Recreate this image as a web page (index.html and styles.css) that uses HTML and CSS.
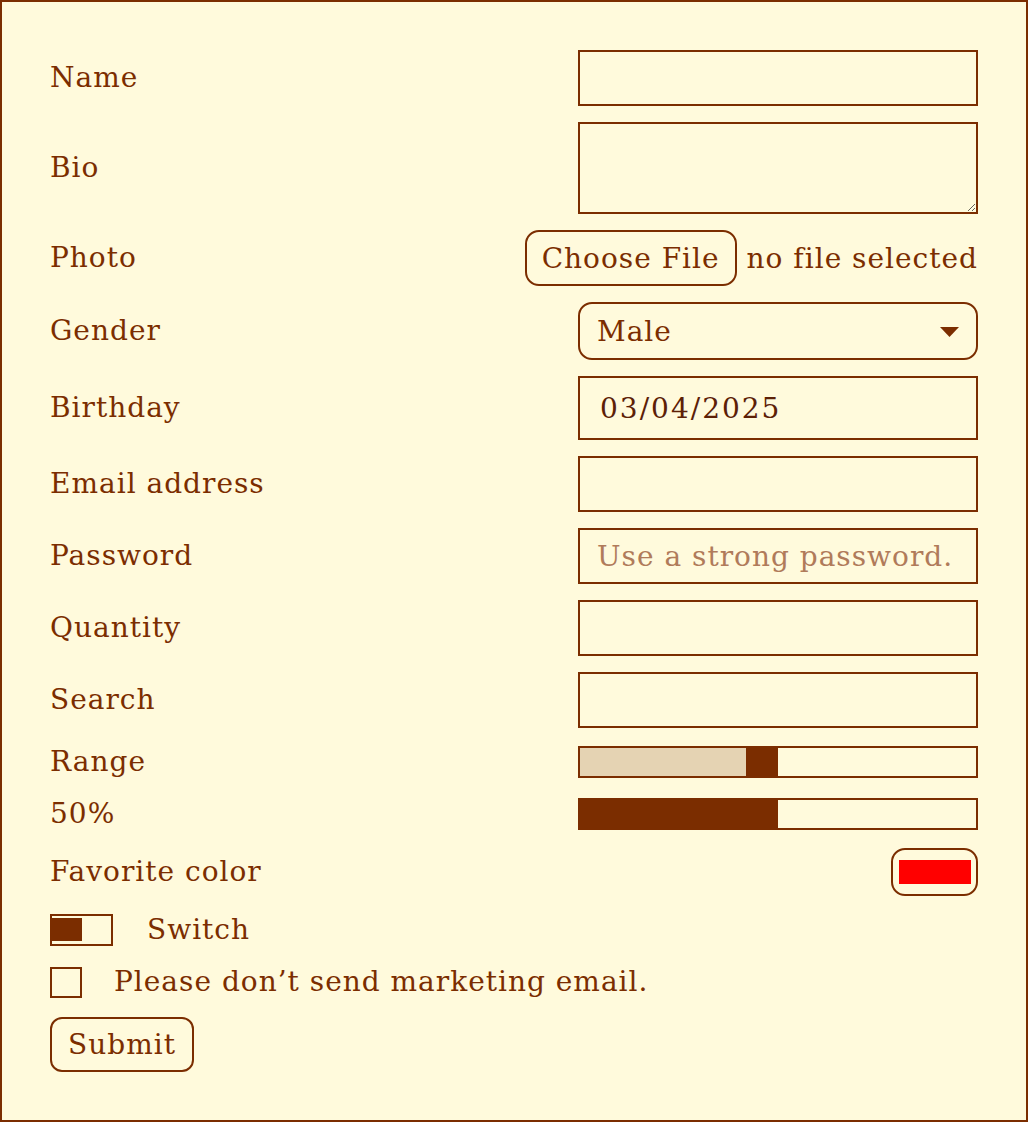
FILE: index.html
```html
<!DOCTYPE html>
<html lang="en">
<head>
<meta charset="utf-8">
<title>Form</title>
<link rel="stylesheet" href="styles.css">
</head>
<body>
<form class="form">
  <div class="row">
    <label class="lbl" for="name">Name</label>
    <input class="field" id="name" type="text">
  </div>
  <div class="row">
    <label class="lbl" for="bio">Bio</label>
    <textarea class="field area" id="bio"></textarea>
  </div>
  <div class="row">
    <span class="lbl">Photo</span>
    <div class="file">
      <label class="btn file-btn" for="photo">Choose File</label>
      <input class="hidden" id="photo" type="file">
      <span class="file-text">no file selected</span>
    </div>
  </div>
  <div class="row">
    <label class="lbl" for="gender">Gender</label>
    <div class="select-wrap">
      <select class="field select" id="gender">
        <option>Male</option>
        <option>Female</option>
        <option>Other</option>
      </select>
      <svg class="caret" width="19" height="10" viewBox="0 0 19 10"><path d="M0 0h19L9.5 10z" fill="#7b2d00"/></svg>
    </div>
  </div>
  <div class="row">
    <label class="lbl" for="bday">Birthday</label>
    <input class="field date" id="bday" type="text" value="03/04/2025">
  </div>
  <div class="row">
    <label class="lbl" for="email">Email address</label>
    <input class="field" id="email" type="email">
  </div>
  <div class="row">
    <label class="lbl" for="pw">Password</label>
    <input class="field" id="pw" type="password" placeholder="Use a strong password.">
  </div>
  <div class="row">
    <label class="lbl" for="qty">Quantity</label>
    <input class="field" id="qty" type="text">
  </div>
  <div class="row">
    <label class="lbl" for="search">Search</label>
    <input class="field" id="search" type="search">
  </div>
  <div class="row">
    <label class="lbl" for="range">Range</label>
    <input class="range" id="range" type="range" min="0" max="1000" value="456">
  </div>
  <div class="row">
    <span class="lbl">50%</span>
    <div class="progress" role="progressbar" aria-valuenow="50" aria-valuemin="0" aria-valuemax="100"></div>
  </div>
  <div class="row">
    <label class="lbl" for="color">Favorite color</label>
    <label class="color" for="color"><span class="swatch"></span></label>
    <input class="hidden" id="color" type="color" value="#ff0000">
  </div>
  <div class="line">
    <span class="switch" role="switch" aria-checked="false"><span class="knob"></span></span>
    <span class="switch-label">Switch</span>
  </div>
  <div class="line">
    <input class="check" id="nomail" type="checkbox">
    <label class="check-label" for="nomail">Please don’t send marketing email.</label>
  </div>
  <div class="line submit-line">
    <button class="btn submit" type="submit">Submit</button>
  </div>
</form>
</body>
</html>
```

FILE: styles.css
```css
* { box-sizing: border-box; }
html, body { margin: 0; }
body {
  width: 1028px;
  height: 1122px;
  background: #fffadc;
  border: 2px solid #7b2d00;
  color: #7b2d00;
  font-family: "DejaVu Serif", "Liberation Serif", serif;
  font-size: 28px;
  letter-spacing: 1px;
  padding: 48px;
}
.form {
  display: flex;
  flex-direction: column;
  gap: 16px;
}
.row {
  display: flex;
  align-items: center;
  justify-content: space-between;
  min-height: 36px;
}
.lbl {
  line-height: 36px;
  white-space: nowrap;
}
.field {
  width: 400px;
  height: 56px;
  border: 2px solid #7b2d00;
  background: #fffadc;
  color: #7b2d00;
  font: inherit;
  letter-spacing: inherit;
  padding: 0 17px;
  border-radius: 0;
  outline: none;
  margin: 0;
}
.field::placeholder { color: #b07b5a; }
.area {
  height: 92px;
  resize: vertical;
  display: block;
}
.hidden { display: none; }
.file {
  display: flex;
  align-items: center;
  gap: 10px;
}
.btn {
  border: 2px solid #7b2d00;
  border-radius: 14px;
  background: #fffadc;
  color: #7b2d00;
  font: inherit;
  letter-spacing: inherit;
  display: inline-flex;
  align-items: center;
  justify-content: center;
  margin: 0;
  cursor: pointer;
}
.file-btn {
  height: 56px;
  padding: 0 15px;
}
.file-text { white-space: nowrap; }
.select-wrap {
  position: relative;
  display: flex;
}
.select {
  appearance: none;
  -webkit-appearance: none;
  height: 58px;
  border-radius: 14px;
  padding: 0 17px;
}
.caret {
  position: absolute;
  right: 19px;
  top: 25px;
  pointer-events: none;
}
.date {
  height: 64px;
  padding: 0 20px;
  color: #5c2006;
  letter-spacing: 2px;
}
.range {
  -webkit-appearance: none;
  appearance: none;
  width: 400px;
  height: 32px;
  margin: 0;
  border: 2px solid #7b2d00;
  background: linear-gradient(to right, #e5d3b3 0 166px, #fffadc 166px);
}
.range::-webkit-slider-runnable-track {
  height: 28px;
  background: transparent;
}
.range::-webkit-slider-thumb {
  -webkit-appearance: none;
  appearance: none;
  width: 32px;
  height: 28px;
  background: #7b2d00;
  border: 0;
  border-radius: 0;
}
.progress {
  width: 400px;
  height: 32px;
  border: 2px solid #7b2d00;
  background: linear-gradient(to right, #7b2d00 0 50%, #fffadc 50%);
  background-origin: border-box;
}
.color {
  width: 87px;
  height: 48px;
  border: 2px solid #7b2d00;
  border-radius: 14px;
  display: flex;
  align-items: center;
  justify-content: center;
  cursor: pointer;
}
.swatch {
  width: 72px;
  height: 24px;
  background: #ff0000;
}
.line {
  display: flex;
  align-items: center;
  min-height: 36px;
}
.submit-line { margin-top: 1px; }
.switch {
  width: 63px;
  height: 32px;
  border: 2px solid #7b2d00;
  padding: 2px 0;
  display: flex;
}
.knob {
  width: 30px;
  height: 23px;
  background: #7b2d00;
}
.switch-label {
  margin-left: 34px;
  line-height: 36px;
}
.check {
  -webkit-appearance: none;
  appearance: none;
  width: 32px;
  height: 31px;
  margin: 0;
  border: 2px solid #7b2d00;
  background: #fffadc;
}
.check-label {
  margin-left: 32px;
  line-height: 36px;
}
.submit {
  height: 55px;
  padding: 0 16px;
  border-radius: 12px;
}
```
